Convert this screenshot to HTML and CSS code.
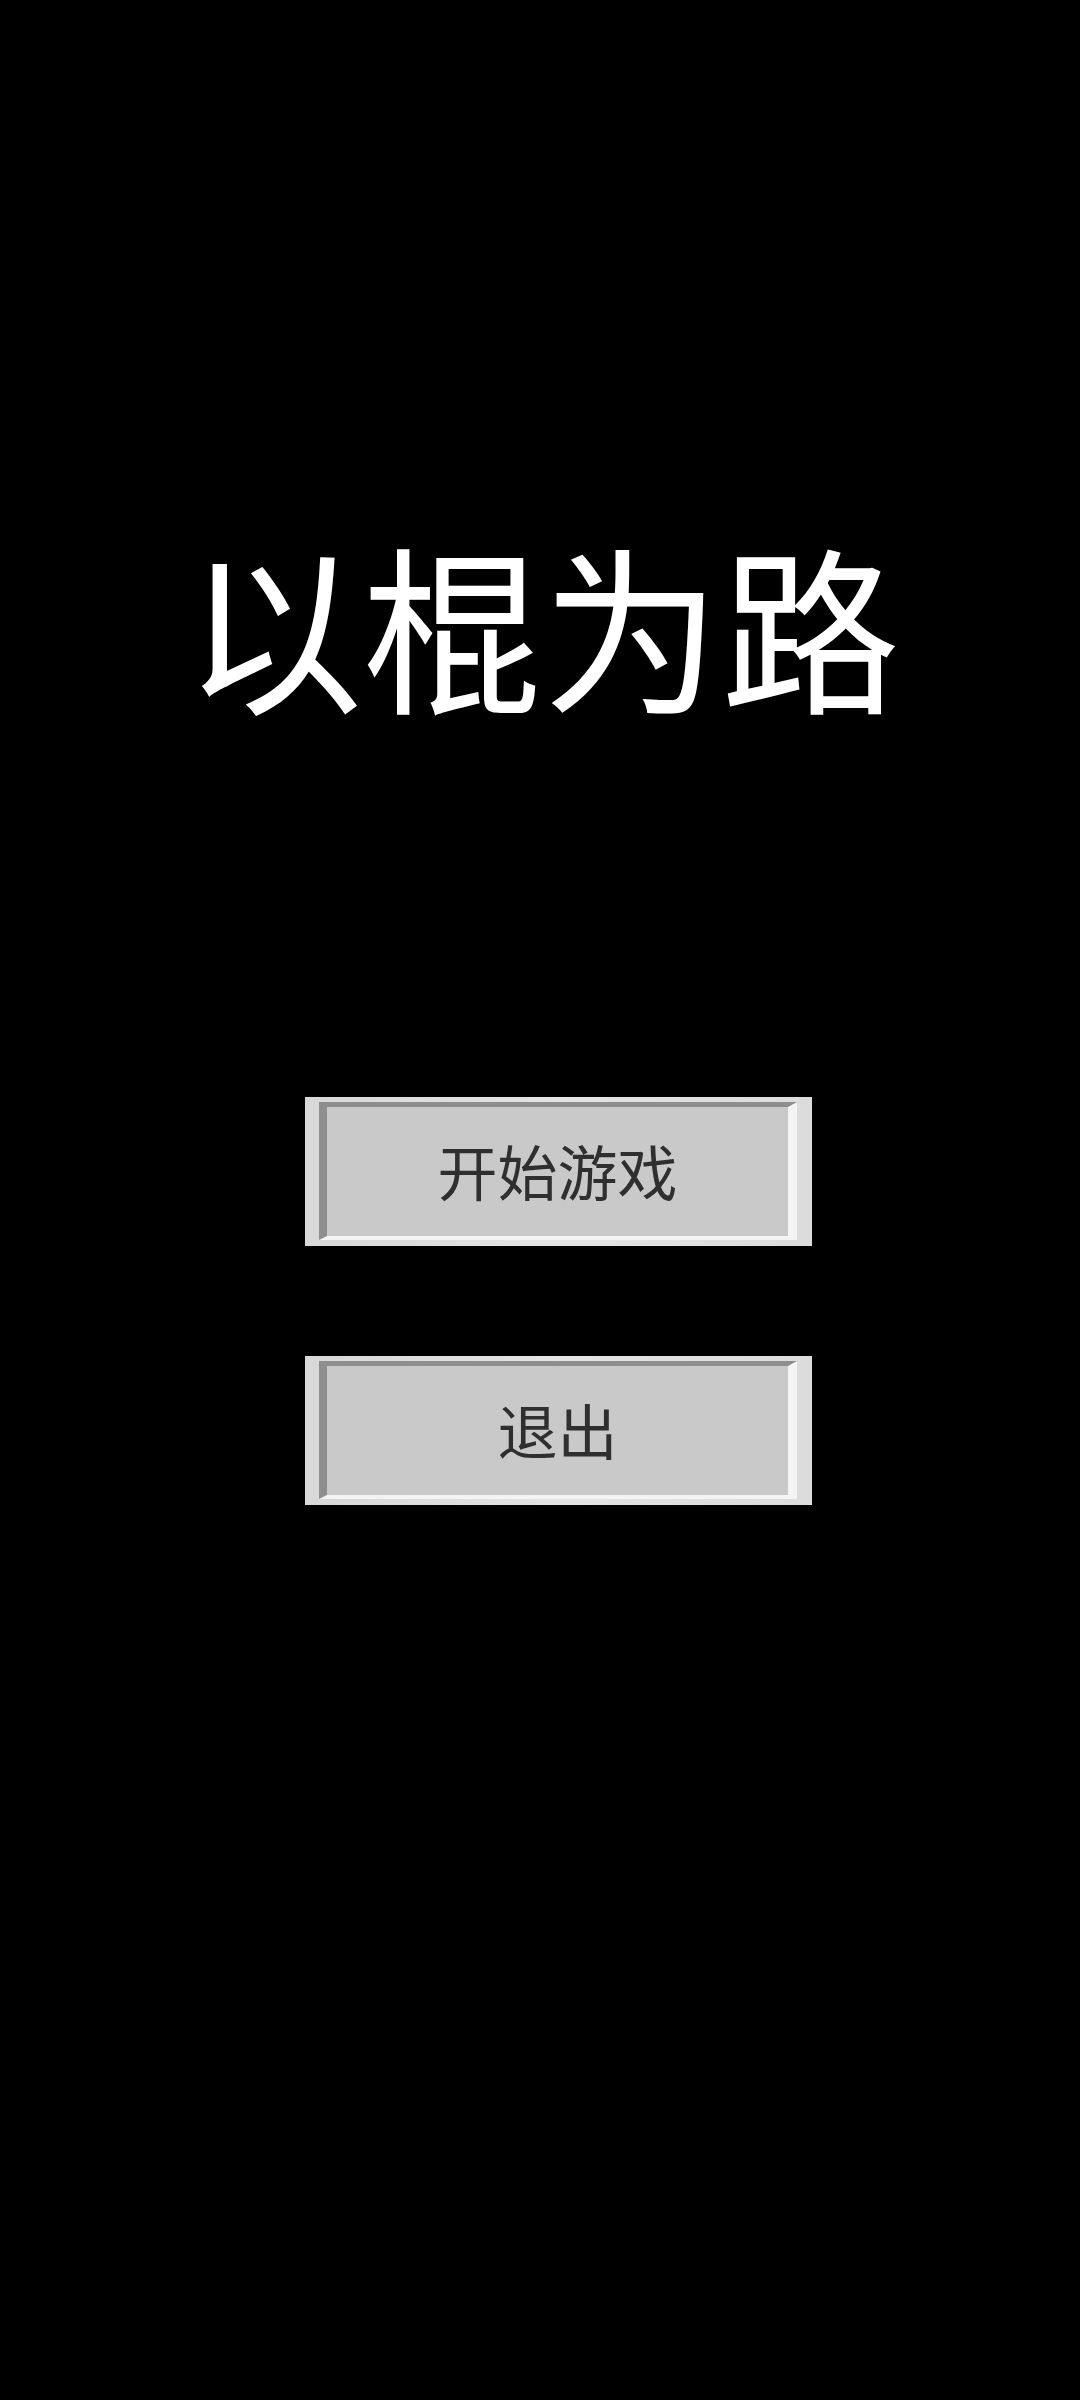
FILE: index.html
```html
<!DOCTYPE html>
<html lang="zh-CN">
<head>
<meta charset="utf-8">
<title>以棍为路</title>
<link rel="stylesheet" href="styles.css">
</head>
<body>
<main class="screen">
  <h1 class="title">以棍为路</h1>
  <nav class="menu">
    <button class="btn" type="button"><span class="btn-face">开始游戏</span></button>
    <button class="btn" type="button"><span class="btn-face">退出</span></button>
  </nav>
</main>
</body>
</html>
```
FILE: styles.css
```css
html, body {
  margin: 0;
  padding: 0;
  background: #000;
}

.screen {
  display: flex;
  flex-direction: column;
  align-items: flex-start;
  min-height: 2400px;
  background: #000;
  font-family: "Noto Sans CJK SC", "Noto Sans", sans-serif;
}

.title {
  margin: 534px 0 0 184px;
  font-size: 179px;
  line-height: 1;
  font-weight: 400;
  color: #fff;
  white-space: nowrap;
}

.menu {
  margin: 384px 0 0 305px;
  display: flex;
  flex-direction: column;
  gap: 110px;
}

.btn {
  display: flex;
  box-sizing: border-box;
  width: 507px;
  height: 149px;
  margin: 0;
  padding: 5px 15px 6px 14px;
  border: none;
  border-radius: 0;
  background: linear-gradient(to right, #d8d8d8, #e4e4e4 50%, #dcdcdc);
  font-family: inherit;
  cursor: pointer;
}

.btn-face {
  flex: 1;
  display: flex;
  align-items: center;
  justify-content: center;
  padding-bottom: 4px;
  border-style: solid;
  border-width: 5px 9px 4px 8px;
  border-color: #8e8e8e #f4f4f4 #f4f4f4 #8e8e8e;
  background: #c9c9c9;
  color: #2f2f2f;
  font-size: 60px;
  line-height: 1;
}
```
